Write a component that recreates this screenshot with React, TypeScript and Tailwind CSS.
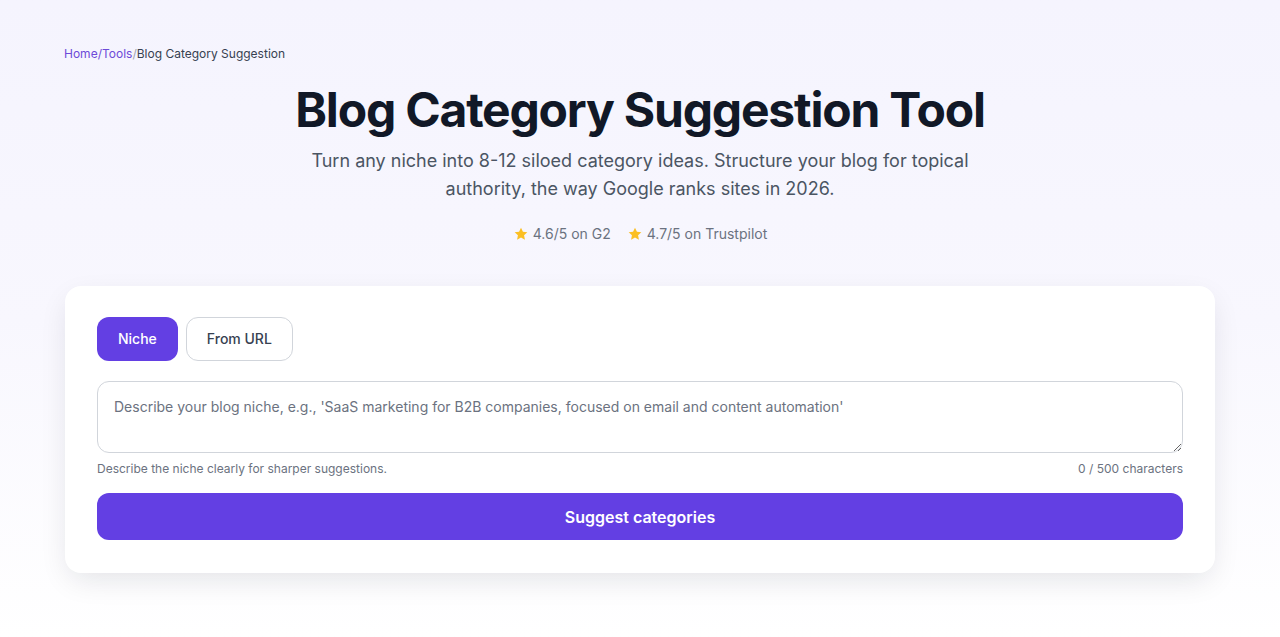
import { useState } from "react";

function Star() {
  return (
    <svg viewBox="0 0 24 24" className="h-4 w-4 fill-[#fbbf24]" aria-hidden>
      <path d="M12 2.5l2.9 6.1 6.6.8-4.9 4.6 1.3 6.6L12 17.3l-5.9 3.3 1.3-6.6-4.9-4.6 6.6-.8z" />
    </svg>
  );
}

export default function App() {
  const [mode, setMode] = useState<"niche" | "url">("niche");
  const [text, setText] = useState("");

  return (
    <div className="min-h-[637px] bg-gradient-to-b from-[#f5f4fe] via-[#f8f7fe] to-white font-['Inter',sans-serif]">
      <div className="mx-auto flex max-w-[1152px] flex-col pt-[46px] pb-16">
        {/* BREADCRUMB */}
        <nav className="text-xs leading-4 text-[#374151]">
          <a className="text-[#6d4ad8]">Home</a>
          <span className="text-[#6d4ad8]">/</span>
          <a className="text-[#6d4ad8]">Tools</a>
          <span className="text-[#9ca3af]">/</span>
          <span>Blog Category Suggestion</span>
        </nav>

        {/* HEADER */}
        <h1 className="mt-6 text-center text-5xl leading-[48px] font-bold tracking-tight text-[#111827]">
          Blog Category Suggestion Tool
        </h1>
        <p className="mx-auto mt-[13px] max-w-[672px] text-center text-lg leading-7 text-[#4b5563]">
          Turn any niche into 8-12 siloed category ideas. Structure your blog for topical authority, the way Google ranks sites in 2026.
        </p>
        <div className="mt-[21px] flex items-center justify-center gap-4 text-sm leading-5 text-[#6b7280]">
          <span className="flex items-center gap-1">
            <Star />
            4.6/5 on G2
          </span>
          <span className="flex items-center gap-1">
            <Star />
            4.7/5 on Trustpilot
          </span>
        </div>

        {/* TOOL CARD */}
        <div className="mx-px mt-[42px] rounded-2xl bg-white px-8 pt-[31px] pb-[33px] shadow-[0_10px_30px_-5px_rgba(17,24,39,0.12)]">
          <div className="flex gap-2">
            <button
              onClick={() => setMode("niche")}
              className={
                mode === "niche"
                  ? "h-11 rounded-xl bg-[#633fe3] px-[21px] text-sm font-medium text-white"
                  : "h-11 rounded-xl border border-[#d1d5db] bg-white px-5 text-sm font-medium text-[#374151]"
              }
            >
              Niche
            </button>
            <button
              onClick={() => setMode("url")}
              className={
                mode === "url"
                  ? "h-11 rounded-xl bg-[#633fe3] px-5 text-sm font-medium text-white"
                  : "h-11 rounded-xl border border-[#d1d5db] bg-white px-5 text-sm font-medium text-[#374151]"
              }
            >
              From URL
            </button>
          </div>

          <textarea
            value={text}
            maxLength={500}
            onChange={(e) => setText(e.target.value)}
            placeholder="Describe your blog niche, e.g., 'SaaS marketing for B2B companies, focused on email and content automation'"
            className="mt-5 block h-[72px] w-full rounded-xl border border-[#d1d5db] px-4 pt-[15px] pb-3 text-sm leading-5 text-[#111827] placeholder:text-[#6b7280] focus:outline-none"
          />
          <div className="mt-2 flex justify-between text-xs leading-4 text-[#6b7280]">
            <span>Describe the niche clearly for sharper suggestions.</span>
            <span>{text.length} / 500 characters</span>
          </div>

          <button className="mt-4 h-[47px] w-full rounded-xl bg-[#633fe3] text-base font-semibold text-white">
            Suggest categories
          </button>
        </div>
      </div>
    </div>
  );
}
